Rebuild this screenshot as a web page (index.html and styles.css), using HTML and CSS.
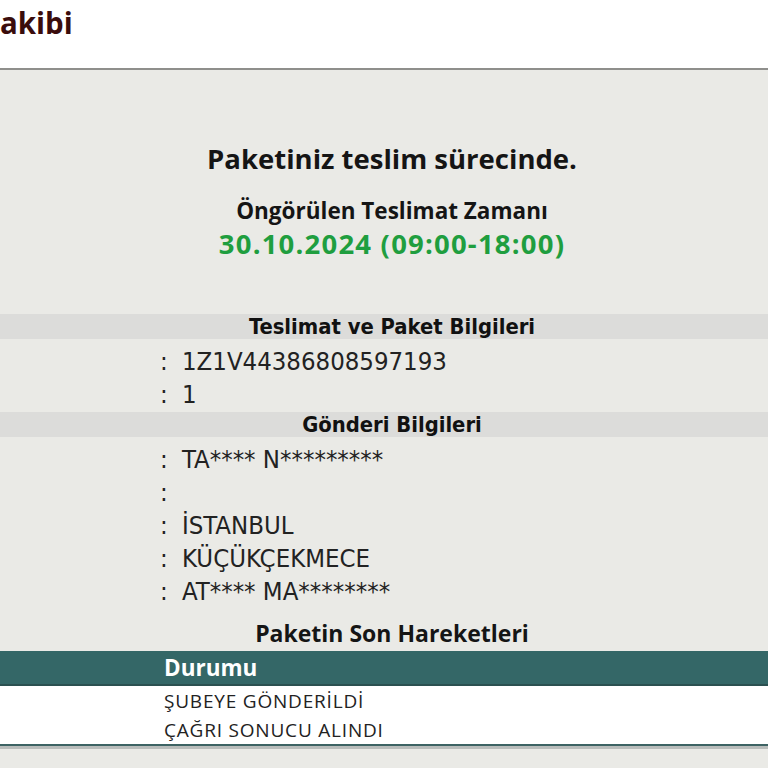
FILE: index.html
```html
<!DOCTYPE html>
<html lang="tr">
<head>
  <meta charset="UTF-8">
  <title>Kargo Takibi</title>
  <link rel="stylesheet" href="styles.css">
</head>
<body>
  <div class="page-header">
    <h1 class="page-title">akibi</h1>
  </div>

  <div class="tracking">
    <div class="status-box">
      <div class="status-title">Paketiniz teslim sürecinde.</div>
      <div class="status-sub">Öngörülen Teslimat Zamanı</div>
      <div class="status-date">30.10.2024 (09:00-18:00)</div>
    </div>

    <div class="section-bar">Teslimat ve Paket Bilgileri</div>
    <div class="info-row"><span class="info-label"></span><span class="info-sep">:</span><span class="info-value">1Z1V44386808597193</span></div>
    <div class="info-row"><span class="info-label"></span><span class="info-sep">:</span><span class="info-value">1</span></div>

    <div class="section-bar second">Gönderi Bilgileri</div>
    <div class="info-row"><span class="info-label"></span><span class="info-sep">:</span><span class="info-value">TA**** N*********</span></div>
    <div class="info-row"><span class="info-label"></span><span class="info-sep">:</span><span class="info-value"></span></div>
    <div class="info-row"><span class="info-label"></span><span class="info-sep">:</span><span class="info-value">İSTANBUL</span></div>
    <div class="info-row"><span class="info-label"></span><span class="info-sep">:</span><span class="info-value">KÜÇÜKÇEKMECE</span></div>
    <div class="info-row"><span class="info-label"></span><span class="info-sep">:</span><span class="info-value">AT**** MA********</span></div>

    <div class="moves-title">Paketin Son Hareketleri</div>
    <div class="moves-table">
      <div class="moves-head"><span class="moves-cell">Durumu</span></div>
      <div class="moves-row"><span class="moves-cell">ŞUBEYE GÖNDERİLDİ</span></div>
      <div class="moves-row"><span class="moves-cell">ÇAĞRI SONUCU ALINDI</span></div>
    </div>
  </div>
</body>
</html>
```

FILE: styles.css
```css
body {
  margin: 0;
  background: #eaeae6;
  font-family: "Open Sans", "Noto Sans", sans-serif;
  color: #1a1a1a;
  overflow: hidden;
}
.page-header {
  background: #fff;
  height: 70px;
  border-bottom: 2px solid #8f8f8c;
  box-sizing: border-box;
}
.page-title {
  margin: 0;
  padding-top: 3px;
  font-size: 29.5px;
  line-height: 40px;
  font-weight: 700;
  color: #3a0c0c;
}
.tracking {
  padding-bottom: 40px;
}
.status-box {
  padding: 0 0 0 16px;
  text-align: center;
  height: 244px;
  box-sizing: border-box;
  padding-top: 71px;
}
.status-title {
  font-size: 27.5px;
  font-weight: 700;
  line-height: 36px;
  color: #151515;
}
.status-sub {
  margin-top: 19px;
  font-size: 22.5px;
  font-weight: 700;
  line-height: 30px;
  color: #151515;
}
.status-date {
  font-size: 27.5px;
  font-weight: 700;
  line-height: 36px;
  letter-spacing: 1.2px;
  color: #1f9e3f;
}
.section-bar {
  background: #dcdcda;
  height: 25px;
  line-height: 25px;
  padding-left: 16px;
  text-align: center;
  font-family: "DejaVu Sans Condensed", "DejaVu Sans", sans-serif;
  font-weight: 700;
  font-size: 21.8px;
  color: #111;
  margin-bottom: 5px;
}
.section-bar.second {
  margin-top: 2px;
}
.info-row {
  display: flex;
  height: 33px;
  align-items: center;
  font-family: "DejaVu Sans Condensed", "DejaVu Sans", sans-serif;
  font-size: 25.5px;
  color: #222;
}
.info-label {
  width: 160px;
}
.info-sep {
  width: 22px;
}
.moves-title {
  padding-left: 16px;
  padding-top: 11px;
  margin-bottom: 3px;
  text-align: center;
  font-size: 23px;
  font-weight: 700;
  line-height: 30px;
  color: #151515;
}
.moves-table {
  border-bottom: 2px solid #3d6363;
  box-shadow: 0 3px 0 #b9bdbb;
}
.moves-head {
  background: #346767;
  border-bottom: 2px solid #2b5050;
  height: 35px;
  box-sizing: border-box;
  display: flex;
  align-items: center;
  color: #fff;
  font-size: 22.5px;
  font-weight: 700;
}
.moves-row {
  background: #fff;
  height: 29px;
  display: flex;
  align-items: center;
  font-size: 19px;
  letter-spacing: 0.8px;
  color: #222;
}
.moves-cell {
  padding-left: 164px;
}
```
